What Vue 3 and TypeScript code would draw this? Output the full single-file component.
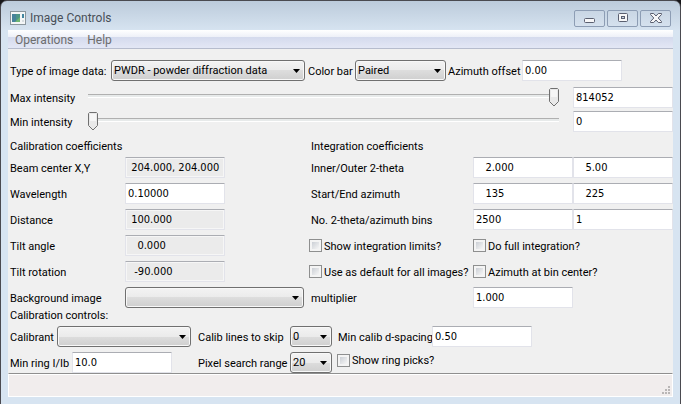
<script setup lang="ts">
import { reactive } from 'vue'

type FieldRow = { id: string; label: string; value: string; locked: boolean }
type PairRow = { id: string; label: string; first: string; second: string }

const image = reactive({
  type: 'PWDR - powder diffraction data',
  palette: 'Paired',
  azimuthOffset: '0.00',
  max: '814052',
  maxPos: 100,
  min: '0',
  minPos: 0,
})

const calibration = reactive<FieldRow[]>([
  { id: 'beam', label: 'Beam center X,Y', value: ' 204.000, 204.000', locked: true },
  { id: 'wave', label: 'Wavelength', value: '0.10000', locked: false },
  { id: 'dist', label: 'Distance', value: ' 100.000', locked: true },
  { id: 'tilt', label: 'Tilt angle', value: '   0.000', locked: true },
  { id: 'rot', label: 'Tilt rotation', value: '  -90.000', locked: true },
])

const ranges = reactive<PairRow[]>([
  { id: 'theta', label: 'Inner/Outer 2-theta', first: '   2.000', second: '   5.00' },
  { id: 'azm', label: 'Start/End azimuth', first: '   135', second: '   225' },
  { id: 'bins', label: 'No. 2-theta/azimuth bins', first: '2500', second: '1' },
])

const options = reactive([
  [
    { label: 'Show integration limits?', on: false },
    { label: 'Do full integration?', on: false },
  ],
  [
    { label: 'Use as default for all images?', on: false },
    { label: 'Azimuth at bin center?', on: false },
  ],
])

const extra = reactive({
  background: '',
  multiplier: '1.000',
  calibrant: '',
  skip: '0',
  dmin: '0.50',
  ring: '10.0',
  search: '20',
  picks: false,
})
</script>

<template>
  <div class="desktop">
    <section class="window">
      <header class="titlebar">
        <svg class="app-icon" width="16" height="14" viewBox="0 0 16 14">
          <rect x="0.5" y="0.5" width="15" height="13" fill="#f4f6f7" stroke="#8b969d" />
          <rect x="2" y="3" width="8" height="8" fill="#4d9587" />
          <path d="M2 3h4v8H2z" fill="#4478a8" opacity="0.6" />
          <path d="M5 11l5-5v5z" fill="#6fb673" />
          <rect x="12" y="3" width="2" height="4" fill="#4386a0" />
          <rect x="12" y="9" width="2" height="2" fill="#d7dde0" />
        </svg>
        <h1>Image Controls</h1>
        <div class="window-buttons">
          <button type="button" aria-label="Minimize">
            <svg width="12" height="12" viewBox="0 0 12 12">
              <rect x="0.5" y="6.5" width="10" height="4" rx="1" fill="#f7f7f8" stroke="#5a5f70" />
            </svg>
          </button>
          <button type="button" aria-label="Maximize">
            <svg width="12" height="12" viewBox="0 0 12 12">
              <rect x="1.5" y="1.5" width="9" height="8" rx="1" fill="#f7f7f8" stroke="#5a5f70" />
              <rect x="4.5" y="4.5" width="3" height="2" fill="#c8d4e2" stroke="#5a5f70" />
            </svg>
          </button>
          <button type="button" aria-label="Close">
            <svg width="12" height="12" viewBox="0 0 12 12">
              <path
                d="M.5 1.5h3.200L6 4l2.300-2.500h3.200v1L8.200 6l3.300 3.500v1H8.300L6 8l-2.300 2.500H.5v-1L3.800 6 .5 2.500z"
                fill="#f7f7f8"
                stroke="#5a5f70"
              />
            </svg>
          </button>
        </div>
      </header>

      <div class="client">
        <nav class="menubar">
          <button type="button">Operations</button>
          <button type="button">Help</button>
        </nav>

        <main class="panel">
          <div class="type-row">
            <label class="type-label" for="type">Type of image data:</label>
            <span class="combo type-combo">
              <select id="type" v-model="image.type"><option>PWDR - powder diffraction data</option></select>
              <svg width="7" height="4" viewBox="0 0 7 4"><path d="M0 0h7L3.500 4z" /></svg>
            </span>
            <label class="bar-label" for="palette">Color bar</label>
            <span class="combo bar-combo">
              <select id="palette" v-model="image.palette"><option>Paired</option></select>
              <svg width="7" height="4" viewBox="0 0 7 4"><path d="M0 0h7L3.500 4z" /></svg>
            </span>
            <label class="offset-label" for="offset">Azimuth offset</label>
            <input id="offset" v-model="image.azimuthOffset" class="field" type="text" />
          </div>

          <div class="sliders">
            <label for="max">Max intensity</label>
            <input id="max" v-model="image.maxPos" class="slider" type="range" />
            <input v-model="image.max" class="field" type="text" aria-label="Max intensity" />
            <label for="min">Min intensity</label>
            <input id="min" v-model="image.minPos" class="slider" type="range" />
            <input v-model="image.min" class="field" type="text" aria-label="Min intensity" />
          </div>

          <div class="headings">
            <h2>Calibration coefficients</h2>
            <h2>Integration coefficients</h2>
          </div>

          <div class="coefficients">
            <div class="calibration">
              <template v-for="row in calibration" :key="row.id">
                <label :for="row.id">{{ row.label }}</label>
                <input :id="row.id" v-model="row.value" class="field" type="text" :readonly="row.locked" />
              </template>
              <label for="background">Background image</label>
              <span class="combo background-combo">
                <select id="background" v-model="extra.background"><option></option></select>
                <svg width="7" height="4" viewBox="0 0 7 4"><path d="M0 0h7L3.500 4z" /></svg>
              </span>
            </div>
            <div class="integration">
              <template v-for="row in ranges" :key="row.id">
                <label class="indent" :for="row.id">{{ row.label }}</label>
                <input :id="row.id" v-model="row.first" class="field" type="text" />
                <input v-model="row.second" class="field" type="text" :aria-label="row.label" />
              </template>
              <template v-for="(pair, i) in options" :key="i">
                <label v-for="(option, j) in pair" :key="option.label" class="check" :class="{ wide: j === 1 }">
                  <input v-model="option.on" type="checkbox" /><span>{{ option.label }}</span>
                </label>
              </template>
              <label class="indent" for="multiplier">multiplier</label>
              <input id="multiplier" v-model="extra.multiplier" class="field" type="text" />
            </div>
          </div>

          <h2 class="controls-heading">Calibration controls:</h2>

          <div class="control-rows">
            <div class="cell">
              <label class="calibrant-label" for="calibrant">Calibrant</label>
              <span class="combo calibrant-combo">
                <select id="calibrant" v-model="extra.calibrant"><option></option></select>
                <svg width="7" height="4" viewBox="0 0 7 4"><path d="M0 0h7L3.500 4z" /></svg>
              </span>
            </div>
            <div class="cell">
              <label class="skip-label" for="skip">Calib lines to skip</label>
              <span class="combo small-combo">
                <select id="skip" v-model="extra.skip"><option>0</option></select>
                <svg width="7" height="4" viewBox="0 0 7 4"><path d="M0 0h7L3.500 4z" /></svg>
              </span>
            </div>
            <div class="cell">
              <label class="spacing-label" for="dmin">Min calib d-spacing</label>
              <input id="dmin" v-model="extra.dmin" class="field" type="text" />
            </div>
            <div class="cell">
              <label class="ring-label" for="ring">Min ring I/Ib</label>
              <input id="ring" v-model="extra.ring" class="field" type="text" />
            </div>
            <div class="cell">
              <label class="skip-label" for="search">Pixel search range</label>
              <span class="combo small-combo">
                <select id="search" v-model="extra.search"><option>20</option></select>
                <svg width="7" height="4" viewBox="0 0 7 4"><path d="M0 0h7L3.500 4z" /></svg>
              </span>
            </div>
            <label class="check picks"><input v-model="extra.picks" type="checkbox" /><span>Show ring picks?</span></label>
          </div>
        </main>

        <footer class="statusbar">
          <svg width="8" height="8" viewBox="0 0 8 8" fill="#b9b6b6">
            <path d="M6 0h2v2H6zM3 3h2v2H3zM6 3h2v2H6zM0 6h2v2H0zM3 6h2v2H3zM6 6h2v2H6z" />
          </svg>
        </footer>
      </div>
    </section>
  </div>
</template>

<style>
body {
  margin: 0;
}
</style>

<style scoped>
* {
  box-sizing: border-box;
}

.desktop {
  display: flex;
  min-height: 100vh;
  background: #17171a;
  color: #000;
  font: 11px/14px Tahoma, Roboto, sans-serif;
}

input,
select,
button {
  margin: 0;
  color: inherit;
  font: inherit;
}

.window {
  display: flex;
  flex: 1;
  flex-direction: column;
  padding: 0 7px 7px;
  border: 1px solid #4a4a50;
  border-radius: 7px 7px 0 0;
  background: linear-gradient(#bccbdb, #d7e4f1 30px);
}

.titlebar {
  display: flex;
  align-items: center;
  height: 29px;
  padding: 5px 2px 0 2px;
}

.app-icon {
  margin-right: 4px;
}

.titlebar h1 {
  flex: 1;
  margin: 0;
  color: #484f58;
  font: 12px/16px 'Segoe UI', Roboto, sans-serif;
}

.window-buttons {
  display: flex;
  gap: 2px;
}

.window-buttons button {
  display: flex;
  align-items: center;
  justify-content: center;
  width: 31px;
  height: 17px;
  padding: 0;
  border: 1px solid #8d9db4;
  border-radius: 2px;
  background: linear-gradient(#c9d6e4, #d5e1ee);
}

.client {
  display: flex;
  flex: 1;
  flex-direction: column;
  background: #f0f0f0;
}

.menubar {
  display: flex;
  gap: 13px;
  height: 19px;
  padding-left: 6px;
  border-bottom: 1px solid #b6bccd;
  background: linear-gradient(#fff, #edf0f8 7px, #d4daed 7px, #e3e7f5 18px);
}

.menubar button {
  padding: 0 0 0 1px;
  border: 0;
  background: none;
  color: #6d6d6d;
  font: 12px/20px 'Segoe UI', Roboto, sans-serif;
}

.panel {
  flex: 1;
  padding: 11px 0 0 2px;
}

label,
.check span {
  padding-top: 2px;
  white-space: nowrap;
}

h2 {
  margin: 0;
  font: inherit;
}

.field {
  width: 100px;
  height: 21px;
  padding: 0 3px 1px 2px;
  border: 1px solid #e2e3ea;
  border-top-color: #abadb3;
  border-radius: 1px;
  background: #fff;
  font-family: Tahoma, 'DejaVu Sans Condensed', 'DejaVu Sans', sans-serif;
  white-space: pre;
}

.field:read-only {
  background: #ebebeb;
  box-shadow: inset 0 0 0 1px #f6f6f6;
}

.combo {
  position: relative;
  display: flex;
  height: 21px;
}

.combo select {
  width: 100%;
  padding: 1px 16px 0 2px;
  appearance: none;
  border: 1px solid #707070;
  border-radius: 3px;
  background: linear-gradient(#f3f3f3, #ebebeb 50%, #dddddd 50%, #cfcfcf);
  box-shadow: inset 0 0 0 1px #f8f8f8;
}

.combo svg {
  position: absolute;
  top: 9px;
  right: 5px;
  pointer-events: none;
}

.type-row {
  display: flex;
  align-items: center;
}

.type-label {
  width: 101px;
}

.type-combo {
  width: 194px;
}

.bar-label {
  width: 50px;
  padding-left: 3px;
}

.bar-combo {
  width: 91px;
}

.offset-label {
  width: 76px;
  padding-left: 2px;
}

.sliders {
  display: grid;
  grid-template-columns: 78px 1fr 100px;
  align-items: center;
  row-gap: 3px;
  margin-top: 6px;
}

.slider {
  width: auto;
  height: 21px;
  margin-right: 14px;
  appearance: none;
  background: linear-gradient(#b0b0b0 1px, #e7eaea 1px, #e7eaea 3px, #fff 3px) 0 7px / 100% 4px no-repeat;
}

.slider::-webkit-slider-thumb {
  width: 10px;
  height: 19px;
  appearance: none;
  background: url("data:image/svg+xml,%3Csvg xmlns='http://www.w3.org/2000/svg' width='10' height='19'%3E%3Cpath d='M1.500 .5h7l1 1v12L5 18 .5 13.500v-12z' fill='%23e9e9e9' stroke='%23707070'/%3E%3Cpath d='M2 2h6v7H2z' fill='%23f6f6f6'/%3E%3C/svg%3E") no-repeat;
}

.headings {
  display: grid;
  grid-template-columns: 301px 1fr;
  padding: 8px 0 3px;
}

.coefficients {
  display: grid;
  grid-template-columns: 299px 1fr;
}

.calibration,
.integration {
  display: grid;
  grid-auto-rows: 21px;
  row-gap: 5px;
  align-items: center;
}

.calibration {
  grid-template-columns: 115px 1fr;
}

.integration {
  grid-template-columns: 164px 1fr 1fr;
}

.integration .field {
  width: 100%;
}

.indent {
  padding-left: 2px;
}

.background-combo {
  width: 179px;
}

.check {
  display: flex;
  align-items: center;
  gap: 2px;
  padding-top: 0;
}

.wide {
  grid-column: span 2;
}

.check input {
  flex: none;
  width: 13px;
  height: 13px;
  appearance: none;
  border: 1px solid #8e8f8f;
  background: linear-gradient(135deg, #cbcfd5, #f6f6f6) 2px 2px / 7px 7px no-repeat, #f4f4f4;
}

.check input:checked {
  background: #4b6a9b;
}

.controls-heading {
  padding: 1px 0 3px;
}

.control-rows {
  display: grid;
  grid-template-columns: 188px 139px 1fr;
  grid-auto-rows: 21px;
  row-gap: 5px;
}

.cell {
  display: flex;
  align-items: center;
}

.calibrant-label {
  width: 47px;
}

.calibrant-combo {
  width: 134px;
}

.skip-label {
  width: 92px;
}

.small-combo {
  width: 42px;
}

.spacing-label {
  width: 95px;
  padding-left: 1px;
}

.ring-label {
  width: 62px;
}

.picks {
  align-self: start;
}

.statusbar {
  display: flex;
  align-items: flex-end;
  justify-content: flex-end;
  height: 24px;
  padding: 2px;
  border: 1px solid #fff;
  border-top: 1px solid #8f8f8f;
  background: #f1eded;
  box-shadow: inset 0 1px #fff;
}
</style>
